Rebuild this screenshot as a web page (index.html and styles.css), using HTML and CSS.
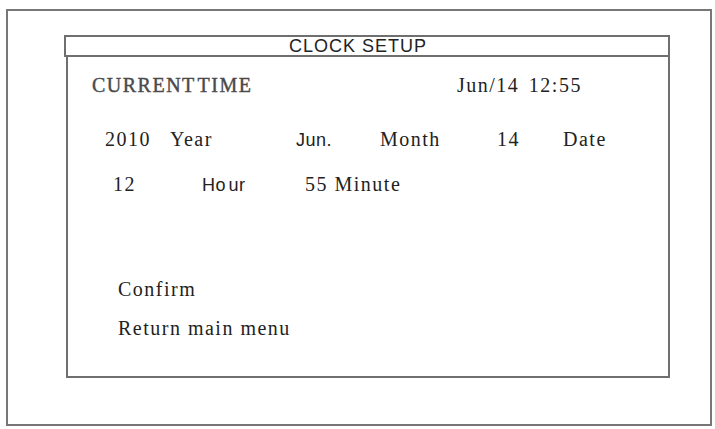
FILE: index.html
```html
<!DOCTYPE html>
<html lang="en">
<head>
    <meta charset="UTF-8">
    <title>Clock Setup</title>
    <link rel="stylesheet" href="styles.css">
</head>
<body>
    <div class="frame">
        <div class="title-bar">CLOCK SETUP</div>
        <div class="panel">
            <div class="row row-current">
                <span class="label-current">CURRENT TIME</span>
                <span class="now">Jun/14 12:55</span>
            </div>
            <div class="row row-date">
                <span class="c-year">2010</span>
                <span class="c-year-label">Year</span>
                <span class="c-month sans">Jun.</span>
                <span class="c-month-label">Month</span>
                <span class="c-day">14</span>
                <span>Date</span>
            </div>
            <div class="row row-time">
                <span class="c-hour">12</span>
                <span class="c-hour-label sans">Ho ur</span>
                <span>55 Minute</span>
            </div>
            <div class="menu">
                <div class="menu-item">Confirm</div>
                <div class="menu-item">Return main menu</div>
            </div>
        </div>
    </div>
</body>
</html>
```

FILE: styles.css
```css
body {
    margin: 0;
    background-color: #fff;
    font-family: "Liberation Serif", "Times New Roman", serif;
    color: #222;
}
.frame {
    box-sizing: border-box;
    width: 706px;
    height: 417px;
    margin: 9px 0 0 6px;
    padding: 24px 0 0 56px;
    border: 2px solid #777;
}
.title-bar {
    box-sizing: border-box;
    width: 606px;
    height: 22px;
    padding-right: 18px;
    border: 2px solid #6f6f6f;
    font-family: "Liberation Sans", Arial, sans-serif;
    font-size: 18px;
    line-height: 18px;
    letter-spacing: 1px;
    text-align: center;
    color: #222;
}
.panel {
    box-sizing: border-box;
    width: 604px;
    height: 321px;
    margin-left: 2px;
    padding-top: 18px;
    border: 2px solid #6f6f6f;
    border-top: none;
}
.row {
    display: flex;
    align-items: baseline;
    font-size: 20px;
    line-height: 20px;
    letter-spacing: 1.5px;
}
.sans {
    font-family: "Liberation Sans", Arial, sans-serif;
    font-size: 18px;
    letter-spacing: 0.5px;
}
.row-current {
    padding-left: 24px;
}
.label-current {
    width: 365px;
    color: #4a4a4a;
    -webkit-text-stroke: 0.4px #4a4a4a;
    word-spacing: -4px;
}
.now {
    word-spacing: 3px;
}
.row-date {
    margin-top: 34px;
    padding-left: 37px;
}
.c-year { width: 65px; }
.c-year-label { width: 126px; }
.c-month { width: 84px; }
.c-month-label { width: 117px; }
.c-day { width: 66px; }
.row-time {
    margin-top: 24px;
    padding-left: 45px;
}
.c-hour { width: 89px; }
.c-hour-label {
    width: 103px;
    word-spacing: -3px;
}
.menu {
    margin-top: 84px;
    padding-left: 50px;
    font-size: 20px;
    line-height: 20px;
    letter-spacing: 1.5px;
}
.menu-item + .menu-item {
    margin-top: 19px;
}
```
